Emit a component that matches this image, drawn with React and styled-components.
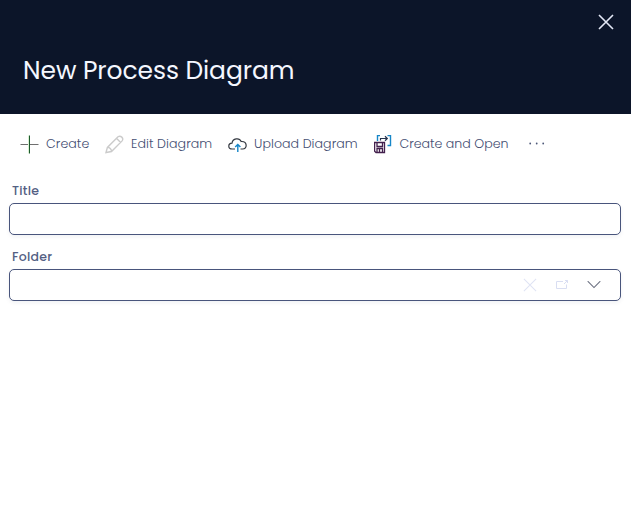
import React from "react";
import styled, { createGlobalStyle } from "styled-components";

const GlobalStyle = createGlobalStyle`
  * { box-sizing: border-box; }
  body { margin: 0; background: #fff; font-family: Poppins, Inter, "Open Sans", sans-serif; }
`;

const Panel = styled.main`
  display: flex;
  flex-direction: column;
  width: 100%;
  height: 531px;
  overflow: hidden;
  background: #fff;
`;

const Header = styled.header`
  display: flex;
  flex-direction: column;
  height: 114px;
  padding: 14px 17px 0 23px;
  background: #0c1529;
`;

const CloseButton = styled.button`
  align-self: flex-end;
  display: flex;
  width: 16px;
  height: 16px;
  padding: 0;
  border: 0;
  background: none;
  color: #e4e8f6;
`;

const Heading = styled.h1`
  margin: 23px 0 0;
  color: #f4f7ff;
  font-size: 25px;
  font-weight: 400;
  line-height: 36px;
  letter-spacing: -0.09px;
  white-space: nowrap;
`;

const Toolbar = styled.div`
  display: flex;
  align-items: center;
  height: 60px;
  padding-left: 20px;
`;

const Command = styled.button`
  display: flex;
  align-items: center;
  flex: none;
  gap: ${(p) => p.$gap}px;
  width: ${(p) => p.$width}px;
  height: 32px;
  padding: 0;
  border: 0;
  background: none;
  color: #444e72;
  font-family: inherit;
  font-size: 12.6px;
  font-weight: 300;
  line-height: 20px;
  letter-spacing: ${(p) => p.$tracking}px;
  white-space: nowrap;
  svg { flex: none; }
`;

const Form = styled.form`
  display: flex;
  flex-direction: column;
  padding: 7px 10px 0 9px;
`;

const Field = styled.div`
  display: flex;
  flex-direction: column;
  height: 66px;
`;

const Label = styled.label`
  height: 22px;
  padding-left: 3px;
  color: #536083;
  font-size: 12.5px;
  font-weight: 500;
  line-height: 19px;
  letter-spacing: ${(p) => p.$tracking}px;
`;

const Control = styled.div`
  display: flex;
  align-items: center;
  justify-content: flex-end;
  height: 32px;
  padding-right: 19px;
  border: 1px solid #49557c;
  border-radius: 5px;
  background: #fff;
  box-shadow: 0 2px 4px rgba(20, 30, 70, 0.06);
`;

const Input = styled.input`
  flex: 1;
  min-width: 0;
  height: 100%;
  padding: 0 8px;
  border: 0;
  outline: 0;
  background: transparent;
  font: inherit;
`;

const ControlIcons = styled.div`
  display: flex;
  align-items: center;
  gap: 18px;
`;

const Cross = ({ size, color, inset = 1, width = 1 }) => (
  <svg width={size} height={size} viewBox="0 0 16 16" fill="none" stroke={color} strokeWidth={width}>
    <path d={`M${inset} ${inset}L${16 - inset} ${16 - inset}M${16 - inset} ${inset}L${inset} ${16 - inset}`} />
  </svg>
);

const PlusIcon = () => (
  <svg width="19" height="19" fill="none">
    <path d="M0.5 9.5H18.5" stroke="#6f6f6f" />
    <path d="M8.5 0.5V18.5" stroke="#d9f0d2" />
    <path d="M9.5 0.5V18.5" stroke="#1d5a2d" />
  </svg>
);

const PencilIcon = () => (
  <svg width="19" height="19" fill="none" stroke="#cbcbcb" strokeWidth="1.4">
    <path d="M1 17.5L2.4 12.4L13 1.8C15.6-.1 19.1 3.2 17.1 5.9L6.5 16.5L1 17.5ZM2.4 12.4C4.4 12.1 6.6 14.1 6.5 16.5M11.5 3.3L15.6 7.4" />
  </svg>
);

const CloudIcon = () => (
  <svg width="19" height="17" fill="none">
    <path d="M7 13H4.2C-.3 13-.3 7.4 4 7.2C4.6 2.2 11.3 1.3 13.2 5.5C19.5 5.1 19.6 13 14.6 13H12.5" stroke="#333840" strokeWidth="1.2" />
    <path d="M9.8 16V8.7M7.2 11L9.8 8.4L12.4 11" stroke="#1686c8" strokeWidth="1.4" />
  </svg>
);

const SaveOpenIcon = () => (
  <svg width="18" height="19" fill="none">
    <path d="M6 .5H3.5V6M13.5 .5H16.5V10.5H13.5" stroke="#1686c8" strokeWidth="1.4" />
    <path d="M6.5 5.5V3.5H13M11 1.3L13.3 3.5L11 5.7" stroke="#26334e" strokeWidth="1.2" />
    <path d="M0.6 7.5H10.5V17.5H2L0.6 16.1V7.5ZM3 7.5V11.5H8.5V7.5M3 17.5V13.5H8.5V17.5M5.5 14V17.5" stroke="#43204d" strokeWidth="1.3" />
  </svg>
);

const MoreIcon = () => (
  <svg width="18" height="4" fill="#4d5878">
    <circle cx="2.2" cy="1.5" r="0.9" />
    <circle cx="8.7" cy="1.5" r="0.9" />
    <circle cx="15.2" cy="1.5" r="0.9" />
  </svg>
);

const OpenIcon = () => (
  <svg width="14" height="12" fill="none" stroke="#d9def2">
    <path d="M8 2.5H1.5V9.5H11.5V5.5M9 5L12.5 1.5M10 1.5H12.5V4" />
  </svg>
);

const ChevronIcon = () => (
  <svg width="14" height="8" fill="none" stroke="#666b7c" strokeWidth="1.05">
    <path d="M0.7 0.2L7 6.5L13.3 0.2" />
  </svg>
);

export default function App() {
  return (
    <Panel>
      <GlobalStyle />
      <Header>
        <CloseButton aria-label="Close"><Cross size={16} color="#e4e8f6" width={1.6} /></CloseButton>
        <Heading>New Process Diagram</Heading>
      </Header>
      <Toolbar>
        <Command $width={85} $gap={7} $tracking={0.06}><PlusIcon />Create</Command>
        <Command $width={123} $gap={7} $tracking={0.08}><PencilIcon />Edit Diagram</Command>
        <Command $width={146} $gap={7} $tracking={0.06}><CloudIcon />Upload Diagram</Command>
        <Command $width={154} $gap={7.5} $tracking={0}><SaveOpenIcon />Create and Open</Command>
        <Command $width={20} $gap={0} $tracking={0} aria-label="More"><MoreIcon /></Command>
      </Toolbar>
      <Form>
        <Field>
          <Label htmlFor="title" $tracking={0.25}>Title</Label>
          <Control><Input id="title" /></Control>
        </Field>
        <Field>
          <Label htmlFor="folder" $tracking={0.25}>Folder</Label>
          <Control>
            <Input id="folder" />
            <ControlIcons>
              <Cross size={14} color="#dfe3f4" width={1.15} />
              <OpenIcon />
              <ChevronIcon />
            </ControlIcons>
          </Control>
        </Field>
      </Form>
    </Panel>
  );
}
